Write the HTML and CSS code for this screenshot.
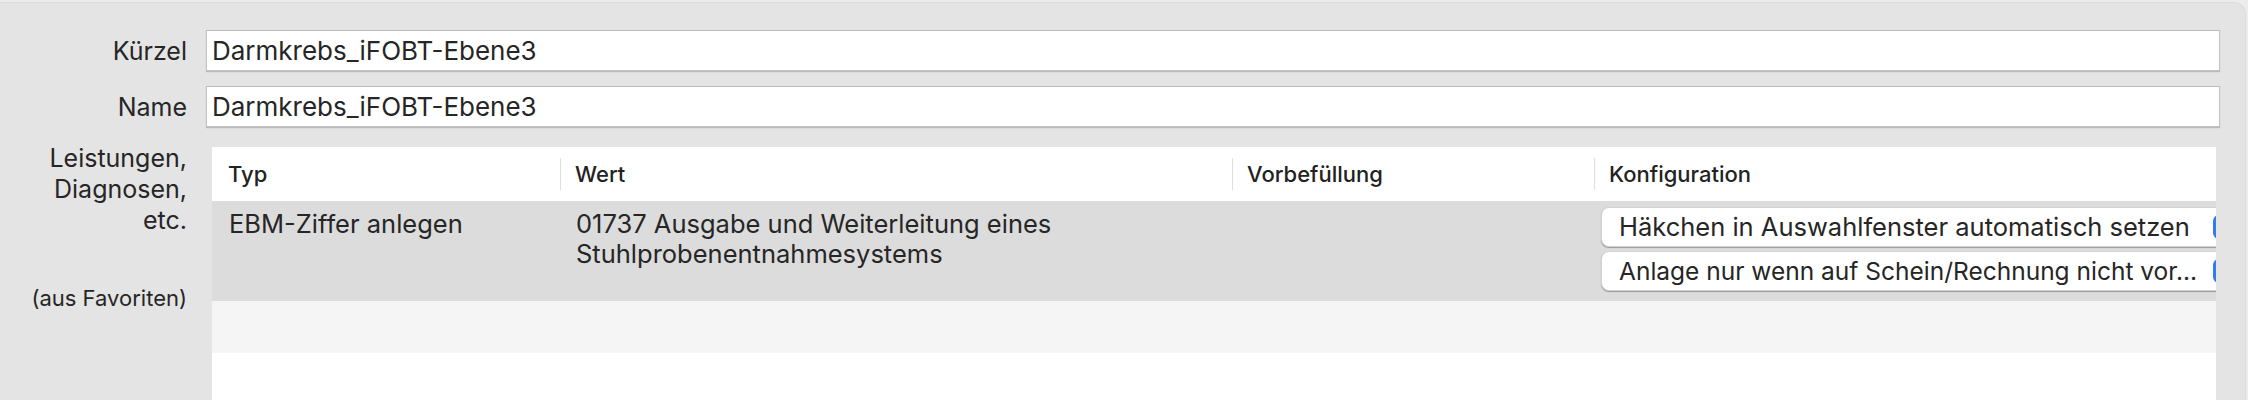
FILE: index.html
```html
<!DOCTYPE html>
<html lang="de">
<head>
<meta charset="utf-8">
<title>Darmkrebs_iFOBT-Ebene3</title>
<link rel="stylesheet" href="styles.css">
</head>
<body>
<div class="panel">
  <div class="form-row">
    <div class="lbl">Kürzel</div>
    <div class="field">Darmkrebs_iFOBT-Ebene3</div>
  </div>
  <div class="form-row">
    <div class="lbl">Name</div>
    <div class="field">Darmkrebs_iFOBT-Ebene3</div>
  </div>
  <div class="form-row table-row">
    <div class="lbl multi">
      <div>Leistungen,<br>Diagnosen,<br>etc.</div>
      <div class="sub">(aus Favoriten)</div>
    </div>
    <div class="table">
      <div class="thead">
        <div class="th first">Typ</div>
        <div class="th">Wert</div>
        <div class="th">Vorbefüllung</div>
        <div class="th">Konfiguration</div>
      </div>
      <div class="tr selected">
        <div class="td typ">EBM-Ziffer anlegen</div>
        <div class="td wert">01737 Ausgabe und Weiterleitung eines<br>Stuhlprobenentnahmesystems</div>
        <div class="td"></div>
        <div class="td config">
          <div class="btn"><span class="btn-text">Häkchen in Auswahlfenster automatisch setzen</span><span class="knob"></span></div>
          <div class="btn"><span class="btn-text narrow">Anlage nur wenn auf Schein/Rechnung nicht vor...</span><span class="knob"></span></div>
        </div>
      </div>
      <div class="tr alt"></div>
      <div class="tr blank"></div>
    </div>
  </div>
</div>
</body>
</html>
```
FILE: styles.css
```css
html, body {
  margin: 0;
  padding: 0;
}
body {
  width: 2248px;
  height: 400px;
  overflow: hidden;
  background: #ececec;
  font-family: Inter, "Noto Sans", "Liberation Sans", sans-serif;
  color: #262626;
}
.panel {
  margin: 2px 2px 0 0;
  height: 398px;
  box-sizing: border-box;
  background: #e4e4e4;
  border-top-right-radius: 12px;
  border-top: 1px solid #dcdcdc;
  border-right: 1px solid #dcdcdc;
  padding: 27px 25px 0 0;
  display: flex;
  flex-direction: column;
  gap: 15px;
}
.form-row {
  display: flex;
  align-items: center;
  gap: 19px;
}
.lbl {
  width: 187px;
  flex: none;
  text-align: right;
  font-size: 25px;
  line-height: 32px;
}
.field {
  flex: 1;
  height: 41px;
  box-sizing: border-box;
  background: #fff;
  border: 1px solid #c4c4c4;
  border-top-color: #b8b8b8;
  box-shadow: 0 1px 1px rgba(0,0,0,0.18);
  padding: 0 5px;
  font-size: 26px;
  line-height: 39px;
  white-space: nowrap;
}
.table-row {
  align-items: flex-start;
  margin-top: 5px;
}
.lbl.multi {
  margin-top: -4px;
  line-height: 31px;
}
.lbl .sub {
  margin-top: 47px;
  font-size: 22px;
  line-height: 30px;
}
.table {
  flex: 1;
  margin: 0 4px 0 6px;
  background: #fff;
  height: 260px;
  display: flex;
  flex-direction: column;
}
.thead, .tr {
  display: grid;
  grid-template-columns: 348px 672px 362px 1fr;
}
.thead {
  height: 54px;
  align-items: center;
}
.th {
  height: 32px;
  line-height: 32px;
  border-left: 1px solid #dedede;
  padding-left: 14px;
  font-size: 22px;
  font-weight: 500;
  color: #222;
}
.th.first {
  border-left-color: transparent;
  padding-left: 15px;
}
.tr.selected {
  height: 100px;
  background: #dcdcdc;
}
.td {
  padding: 8px 0 0 16px;
  font-size: 25.5px;
  line-height: 30px;
  overflow: hidden;
  white-space: nowrap;
}
.td.typ {
  padding-left: 17px;
}
.td.config {
  padding: 6px 0 0 7px;
  display: flex;
  flex-direction: column;
  gap: 4px;
}
.btn {
  flex: none;
  width: 660px;
  height: 40px;
  box-sizing: border-box;
  background: #fff;
  border-radius: 8px;
  border: 1px solid #d2d2d2;
  box-shadow: 0 1px 1px rgba(0,0,0,0.3);
  display: flex;
  align-items: center;
  padding-left: 17px;
  font-size: 25.5px;
  white-space: nowrap;
}
.btn-text {
  width: 594px;
  flex: none;
  overflow: hidden;
}
.btn-text.narrow {
  font-size: 24.5px;
}
.knob {
  width: 24px;
  height: 24px;
  border-radius: 6px;
  background: #2f7cf6;
  flex: none;
}
.tr.alt {
  height: 52px;
  background: #f4f5f4;
  display: block;
}
.tr.blank {
  flex: 1;
  display: block;
}
```
